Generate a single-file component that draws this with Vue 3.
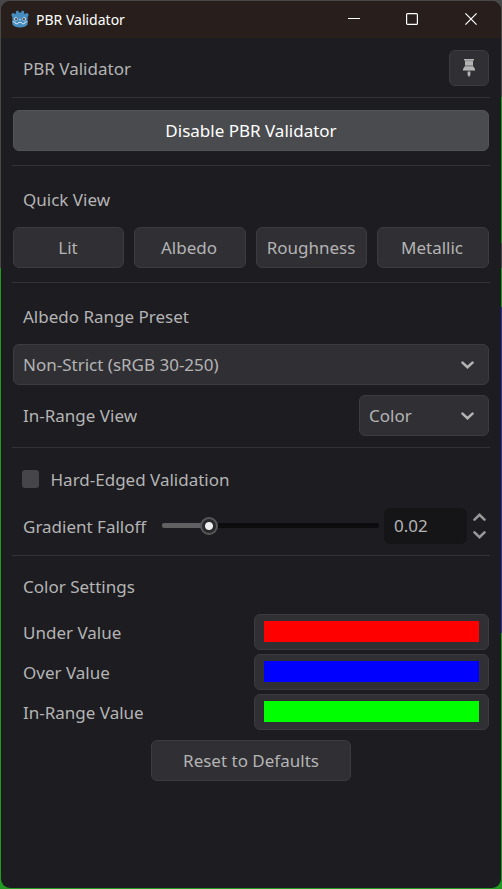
<script setup>
import { ref } from 'vue'

const views = ['Lit', 'Albedo', 'Roughness', 'Metallic']
const falloff = ref(0.02)
const sliderPercent = ref(21.7)
const colors = [
  { label: 'Under Value', value: '#ff0000' },
  { label: 'Over Value', value: '#0000ff' },
  { label: 'In-Range Value', value: '#00ff00' },
]
</script>

<template>
  <div class="desktop">
    <div class="window">
      <header class="titlebar">
        <svg class="logo" width="18" height="18" viewBox="0 0 18 18">
          <path d="M7 .4 8 2.500h2L11 .4l2.200.9-.2 2 1.100.7 1.900-1.200L17.800 4.800l-1.200 2.400v7.200c-1.200 2-4.200 3-7.600 3s-6.400-1-7.600-3V7.200L.2 4.800 2 2.800 3.900 4 5 3.300l-.2-2z" fill="#478cbf" />
          <path d="M1.400 11.800l2.700.3.3 1.500 2.500.2.400-1.300h3.400l.4 1.300 2.500-.2.300-1.500 2.700-.3" fill="none" stroke="#d5e6f2" stroke-width=".9" />
          <circle cx="4.900" cy="9" r="1.800" fill="#e3eaf0" />
          <circle cx="13.100" cy="9" r="1.800" fill="#e3eaf0" />
          <circle cx="5.100" cy="9.100" r="1.200" fill="#4a4e55" />
          <circle cx="12.900" cy="9.100" r="1.200" fill="#4a4e55" />
          <path d="M9 8.700v1.900" stroke="#e3eaf0" stroke-width="1.100" />
        </svg>
        <span class="title">PBR Validator</span>
        <div class="controls">
          <svg class="minimize" width="12" height="12" viewBox="0 0 12 12"><path d="M0 5.500h12" /></svg>
          <svg width="12" height="12" viewBox="0 0 12 12"><rect x=".6" y=".6" width="10.800" height="10.800" rx="1" /></svg>
          <svg width="12" height="12" viewBox="0 0 12 12"><path d="M.4.4l11.200 11.200M11.600.4.4 11.600" /></svg>
        </div>
      </header>

      <main class="panel">
        <div class="head">
          <span class="label">PBR Validator</span>
          <button class="btn pin" aria-label="Pin">
            <svg width="12" height="18" viewBox="0 0 12 18" fill="#b4b4b5">
              <path d="M1 0h10v1.500H10V7l2 3v1.500H0V10l2-3V1.500H1zM4.600 12.500h2.800V16L6 18l-1.400-2z" />
              <path d="M2 1.500h8v.7H2zM2 6.200h8v1.300H2zM0 11h12v.8H0z" fill="#7c7c7e" />
            </svg>
          </button>
        </div>
        <hr>
        <button class="btn primary">Disable PBR Validator</button>
        <hr>
        <h2>Quick View</h2>
        <div class="views">
          <button v-for="v in views" :key="v" class="btn">{{ v }}</button>
        </div>
        <hr>
        <h2>Albedo Range Preset</h2>
        <button class="btn select">
          <span>Non-Strict (sRGB 30-250)</span>
          <svg class="chev" width="13" height="8" viewBox="0 0 13 8"><path d="M1.500 1.600l5 4.600 5-4.600" /></svg>
        </button>
        <div class="row range-row">
          <span>In-Range View</span>
          <button class="btn select small">
            <span>Color</span>
            <svg class="chev" width="13" height="8" viewBox="0 0 13 8"><path d="M1.500 1.600l5 4.600 5-4.600" /></svg>
          </button>
        </div>
        <hr>
        <div class="check">
          <span class="box"></span>
          <span>Hard-Edged Validation</span>
        </div>
        <div class="falloff">
          <span class="name label">Gradient Falloff</span>
          <div class="track">
            <div class="fill" :style="{ width: sliderPercent + '%' }"></div>
            <div class="knob" :style="{ left: sliderPercent + '%' }"></div>
          </div>
          <div class="number">{{ falloff }}</div>
          <div class="steps">
            <svg class="chev" width="13" height="8" viewBox="0 0 13 8"><path d="M1.500 6.600l5-4.800 5 4.800" /></svg>
            <svg class="chev" width="13" height="8" viewBox="0 0 13 8"><path d="M1.500 1.400l5 4.800 5-4.800" /></svg>
          </div>
        </div>
        <hr>
        <h2 class="color-title">Color Settings</h2>
        <div class="colors">
          <div v-for="c in colors" :key="c.label" class="row">
            <span class="label">{{ c.label }}</span>
            <button class="btn swatch" :aria-label="c.label">
              <span :style="{ background: c.value }"></span>
            </button>
          </div>
        </div>
        <button class="btn reset">Reset to Defaults</button>
      </main>
    </div>
  </div>
</template>

<style>
body {
  background: #1d1c20;
}
</style>

<style scoped>
* {
  box-sizing: border-box;
}
.desktop {
  height: 889px;
  padding: 1px;
  background:
    linear-gradient(#484848 97px, #219b21 97px 243px, #484848 243px 268px, #219b21 268px 307px, #3030a5 307px 633px, #219b21 633px) right / 10px 100% no-repeat,
    linear-gradient(#484848 268px, #219b21 268px);
  font-family: "Noto Sans", sans-serif;
  font-size: 17px;
  line-height: 24px;
  color: #b4b4b5;
}
.window {
  height: 887px;
  border-radius: 9px;
  overflow: hidden;
  background: #1d1c20;
}
.titlebar {
  height: 37px;
  display: flex;
  align-items: center;
  padding: 0 24px 0 10px;
  background: #281f1c;
  color: #fff;
}
.logo {
  margin-bottom: 1px;
}
.title {
  margin-left: 7px;
  font-size: 14px;
}
.controls {
  height: 12px;
  margin: 0 0 1px auto;
  display: flex;
  gap: 47px;
}
.controls svg {
  fill: none;
  stroke: #fff;
  stroke-width: 1.2;
}
.controls .minimize {
  margin-right: -1px;
  stroke-width: 1;
}
.panel {
  display: flex;
  flex-direction: column;
  padding: 12px 12px 0;
}
.label {
  padding-top: 2px;
}
.head {
  height: 36px;
  display: flex;
  align-items: center;
  justify-content: space-between;
  padding-left: 10px;
}
hr {
  flex: none;
  width: 478px;
  height: 1px;
  margin: 14px -1px 0;
  border: 0;
  background: #333236;
}
.head + hr {
  margin-top: 11px;
}
.btn {
  flex: none;
  height: 41px;
  padding: 0 9px;
  display: flex;
  align-items: center;
  justify-content: center;
  border: 1px solid #3c3b3f;
  border-radius: 6px;
  background: #302f33;
  color: inherit;
  font: inherit;
}
.pin {
  width: 40px;
  height: 36px;
}
.primary {
  margin-top: 12px;
  border-color: #535458;
  background: #4a4b4f;
  color: #fff;
}
h2 {
  height: 24px;
  margin: 22px 0 15px;
  padding-left: 10px;
  font: inherit;
}
.views {
  display: grid;
  grid-template-columns: 111px 112px 111px 112px;
  gap: 10px;
}
.views .btn {
  padding: 0 9px 0 8px;
}
.views .btn:nth-child(even) {
  padding-right: 10px;
}
.select {
  justify-content: space-between;
  padding-right: 14px;
}
.chev {
  fill: none;
  stroke: #b4b4b5;
  stroke-width: 2.6;
  stroke-linecap: round;
}
.row {
  display: flex;
  align-items: center;
  justify-content: space-between;
  padding-left: 10px;
}
.range-row {
  margin-top: 10px;
}
.range-row + hr {
  margin-top: 11px;
}
.small {
  width: 130px;
}
.check {
  display: flex;
  align-items: center;
  height: 24px;
  margin-top: 20px;
  padding-left: 9px;
  gap: 11.5px;
}
.box {
  width: 17px;
  height: 18px;
  margin-bottom: 2px;
  border-radius: 3px;
  background: #464549;
}
.falloff {
  display: flex;
  align-items: center;
  height: 36px;
  margin-top: 16px;
  padding-left: 10px;
}
.name {
  width: 139px;
}
.track {
  position: relative;
  width: 217px;
  height: 5px;
  margin-bottom: 1px;
  border-radius: 2px;
  background: #0c0c0e;
}
.fill {
  height: 5px;
  border-radius: 2px;
  background: #606063;
}
.knob {
  position: absolute;
  top: 3px;
  width: 18px;
  height: 18px;
  border: 2px solid #575759;
  border-radius: 50%;
  transform: translate(-50%, -50%);
  background: radial-gradient(circle, #ededed 3.500px, #29282c 4.500px);
}
.number {
  width: 83px;
  height: 36px;
  margin-left: 5px;
  padding-left: 10px;
  border-radius: 6px;
  background: #151517;
  line-height: 36px;
}
.steps {
  display: flex;
  flex-direction: column;
  gap: 10px;
  margin-left: 5.500px;
}
.steps svg {
  stroke: #98989a;
}
.falloff + hr {
  margin-top: 11px;
}
.color-title {
  margin: 19px 0 15px;
}
.colors {
  display: grid;
  gap: 4px;
}
.swatch {
  width: 235px;
  height: 36px;
}
.swatch span {
  width: 215px;
  height: 21px;
  margin-bottom: 1px;
}
.reset {
  width: 200px;
  margin: 10px auto 0;
}
</style>
